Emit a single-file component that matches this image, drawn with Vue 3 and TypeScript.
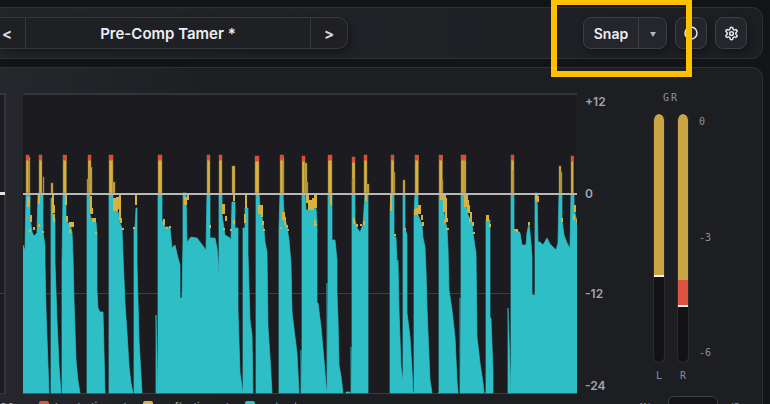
<template>
  <div class="page">
    <header class="topbar">
      <div class="preset">
        <button class="preset-arrow">&lt;</button>
        <div class="preset-name">Pre-Comp Tamer *</div>
        <button class="preset-arrow">&gt;</button>
      </div>
      <div class="actions">
        <div class="snap">
          <span class="snap-label">Snap</span>
          <span class="snap-drop"><i class="tri" /></span>
        </div>
        <button class="icon-btn">
          <svg width="16" height="16" viewBox="0 0 16 16" fill="none">
            <circle cx="8" cy="8" r="6" stroke="#e6e8ec" stroke-width="1.5" />
          </svg>
        </button>
        <button class="icon-btn">
          <svg width="15" height="15" viewBox="0 0 24 24" fill="none" stroke="#e6e8ec" stroke-width="2.4" stroke-linejoin="round">
            <path d="M12.220 2h-.440a2 2 0 0 0-2 2v.180a2 2 0 0 1-1 1.730l-.430.250a2 2 0 0 1-2 0l-.150-.080a2 2 0 0 0-2.730.730l-.220.380a2 2 0 0 0 .730 2.730l.150.100a2 2 0 0 1 1 1.720v.510a2 2 0 0 1-1 1.740l-.150.090a2 2 0 0 0-.730 2.730l.220.380a2 2 0 0 0 2.730.730l.150-.080a2 2 0 0 1 2 0l.430.250a2 2 0 0 1 1 1.730V20a2 2 0 0 0 2 2h.440a2 2 0 0 0 2-2v-.180a2 2 0 0 1 1-1.730l.430-.250a2 2 0 0 1 2 0l.150.080a2 2 0 0 0 2.730-.730l.220-.390a2 2 0 0 0-.730-2.730l-.150-.080a2 2 0 0 1-1-1.740v-.500a2 2 0 0 1 1-1.740l.150-.090a2 2 0 0 0 .730-2.730l-.220-.380a2 2 0 0 0-2.730-.730l-.150.080a2 2 0 0 1-2 0l-.430-.250a2 2 0 0 1-1-1.730V4a2 2 0 0 0-2-2z" />
            <circle cx="12" cy="12" r="3" />
          </svg>
        </button>
      </div>
    </header>

    <main class="panel">
      <div class="main-row">
        <div class="side-box"><i class="side-tick" /><i class="side-line" /></div>

        <svg class="chart" width="554" height="301" viewBox="23 93 554 301">
          <line x1="23" x2="577" y1="293.500" y2="293.500" stroke="#3b3e44" />
          <path
            :d="tealPath"
            fill="#2ebfc6"
            stroke="#2a8f97"
            stroke-width="1"
            paint-order="stroke"
          />
          <rect
            v-for="(s, i) in yellowSpots"
            :key="'y' + i"
            :x="s[0]"
            :y="s[1]"
            :width="s[2]"
            :height="s[3]"
            fill="#d9b13f"
          />
          <template v-for="(s, i) in spikes" :key="'s' + i">
            <rect
              :x="s.x"
              :y="s.top"
              :width="s.w"
              :height="193 - s.top"
              fill="#d9b13f"
              stroke="#7d6c36"
              stroke-width="0.5"
            />
            <rect v-if="s.red" :x="s.x" :y="s.top" :width="s.w" height="5.500" fill="#e5483a" />
          </template>
          <line x1="23" x2="577" y1="194" y2="194" stroke="#b8b8b8" stroke-width="2" />
        </svg>

        <div class="scale">
          <span
            v-for="t in ticks"
            :key="t.label"
            class="scale-label"
            :style="{ top: `${t.top}px` }"
          >{{ t.label }}</span>
        </div>

        <section class="gr">
          <div class="gr-title">GR</div>
          <div class="gr-body">
            <div class="meter">
              <div class="well">
                <div class="fill-yellow" :style="{ height: '161px' }" />
                <div class="peak" />
              </div>
              <span class="meter-name">L</span>
            </div>
            <div class="meter">
              <div class="well">
                <div class="fill-yellow" :style="{ height: '166px' }" />
                <div class="fill-red" :style="{ height: '25px' }" />
                <div class="peak" />
              </div>
              <span class="meter-name">R</span>
            </div>
            <div class="gr-scale">
              <span>0</span>
              <span>-3</span>
              <span>-6</span>
            </div>
          </div>
        </section>
      </div>

      <footer class="legend">
        <span class="legend-num">32</span>
        <span class="legend-item"><i class="sw sw-red" />hard clipped</span>
        <span class="legend-item soft"><i class="sw sw-yellow" />soft clipped</span>
        <span class="legend-item"><i class="sw sw-teal" />output</span>
        <span class="legend-right">
          <span class="mono">Mix</span>
          <span class="legend-box mono">1</span>
          <span class="mono">dB</span>
        </span>
      </footer>
    </main>

    <div class="highlight" />
  </div>
</template>

<script setup lang="ts">
type Pt = [number, number];

const ticks = [
  { label: "+12", top: 2 },
  { label: "0", top: 94 },
  { label: "-12", top: 194 },
  { label: "-24", top: 286 },
];

// teal outlines, read off the screenshot: [x, top of signal]
const bursts: Pt[][] = [
  [[23, 245], [25, 250], [26, 193], [30, 193], [30, 216], [32, 232], [34, 236], [37, 233], [38, 193], [43, 193], [43, 232], [45, 246], [45, 262], [46, 310], [48, 365], [49, 393]],
  [[51, 198], [53, 198], [53, 218], [55, 218], [55, 262], [57, 320], [59, 365], [61, 393]],
  [[62, 263], [63, 193], [66, 193], [66, 222], [70, 224], [72, 232], [73, 255], [74, 300], [76, 360], [78, 381], [80, 393]],
  [[87, 195], [90, 195], [90, 215], [92, 220], [96, 222], [97, 233], [97, 290], [98, 308], [100, 312], [103, 312], [105, 393]],
  [[109, 193], [113, 193], [113, 205], [118, 212], [120, 223], [122, 228], [123, 255], [125, 303], [127, 333], [129, 366], [131, 383], [133, 393]],
  [[134, 228], [135, 228], [136, 208], [137, 208], [137, 262], [139, 340], [142, 393]],
  [[158, 193], [162, 193], [162, 220], [165, 227], [168, 227], [170, 228], [172, 248], [175, 245], [178, 258], [180, 265], [180, 298], [182, 298], [183, 240], [183, 193], [186, 193], [187, 242], [191, 237], [197, 238], [203, 246], [206, 250], [207, 193], [210, 193], [210, 238], [215, 238], [217, 248], [218, 257], [219, 275], [219, 393], [156, 393], [156, 315]],
  [[219, 193], [222, 193], [222, 215], [225, 235], [230, 238], [231, 240], [232, 202], [235, 202], [235, 228], [238, 228], [238, 310], [240, 373], [243, 393], [219, 393]],
  [[243, 228], [245, 228], [245, 208], [248, 208], [248, 253], [250, 320], [252, 335], [253, 393]],
  [[256, 193], [259, 193], [260, 207], [262, 217], [264, 230], [265, 242], [267, 252], [268, 327], [270, 357], [272, 393]],
  [[279, 228], [280, 193], [283, 193], [284, 213], [286, 223], [287, 227], [289, 240], [291, 263], [292, 312], [295, 337], [297, 353], [299, 393]],
  [[302, 193], [305, 193], [306, 210], [312, 210], [316, 208], [317, 223], [317, 303], [318, 303], [321, 327], [324, 360], [326, 385], [327, 393], [301, 393], [301, 350]],
  [[328, 193], [332, 193], [332, 240], [335, 240], [337, 260], [337, 293], [338, 320], [339, 365], [341, 376], [343, 393], [327, 393], [327, 283]],
  [[346, 392], [350, 392], [350, 393], [346, 393]],
  [[352, 193], [355, 193], [355, 220], [357, 228], [360, 232], [363, 225], [365, 193], [368, 193], [368, 393], [351, 393], [351, 347]],
  [[390, 212], [391, 193], [394, 193], [394, 235], [396, 238], [397, 263], [398, 260], [399, 310], [401, 367], [403, 380], [403, 393], [390, 393]],
  [[403, 193], [405, 193], [405, 228], [407, 235], [407, 313], [410, 337], [412, 370], [413, 393], [403, 393]],
  [[414, 215], [415, 193], [418, 193], [418, 215], [420, 220], [422, 224], [423, 238], [425, 247], [426, 270], [427, 307], [428, 333], [430, 380], [432, 393], [412, 393]],
  [[439, 193], [443, 193], [443, 205], [445, 220], [447, 228], [448, 248], [449, 290], [452, 310], [455, 337], [457, 380], [458, 393], [438, 393]],
  [[461, 193], [465, 193], [465, 200], [468, 215], [472, 222], [473, 233], [475, 247], [476, 253], [477, 337], [480, 363], [483, 383], [484, 393], [460, 393], [460, 298]],
  [[486, 220], [490, 220], [490, 318], [491, 318], [493, 372], [493, 393], [485, 393]],
  [[511, 193], [514, 193], [514, 230], [517, 230], [520, 233], [522, 245], [526, 245], [527, 233], [529, 223], [531, 243], [532, 257], [532, 295], [535, 295], [535, 193], [537, 193], [538, 242], [540, 242], [543, 245], [547, 238], [550, 244], [556, 250], [558, 243], [559, 193], [562, 193], [562, 220], [564, 235], [567, 243], [570, 248], [571, 193], [574, 193], [574, 208], [577, 222], [577, 393], [508, 393], [508, 308]],
];

const tealPath = bursts
  .map((pts) => {
    const body = pts.map((p) => `L${p[0]},${p[1]}`).join("");
    return `M${pts[0][0]},393${body}Z`;
  })
  .join("");

const spikes = [
  [26, 3, 155, true], [39, 3, 155, true], [63, 3.5, 155, true], [88, 3, 155, true],
  [109, 4, 155, true], [158, 4, 155, true], [207, 3, 155, true], [219, 3, 155, true],
  [255, 4, 156, true], [280, 3.5, 155, true], [302, 3, 156, true], [328, 4, 155, true],
  [352, 3, 157, true], [364, 3, 155, true], [391, 3, 155, true], [415, 3.5, 155, true],
  [439, 3.5, 155, true], [461, 3.5, 155, true], [464, 2, 155, true], [511, 3, 155, true],
  [571, 2.5, 156, true],
  // no clip marker on these
  [51, 2, 183, false], [43, 1, 177, false], [87, 1, 179, false], [90, 2, 167, false],
  [113, 2, 182, false], [232, 3, 166, false], [305, 2, 163, false], [307, 1, 182, false],
  [352, 1, 179, false], [367, 2, 184, false], [403, 2, 180, false], [394, 1, 172, false],
  [442, 1, 180, false], [513, 1, 171, false], [559, 2, 166, false], [561, 1, 172, false],
  [29, 1, 157, false], [283, 1, 158, false],
].map(([x, w, top, red]) => ({ x, w, top, red })) as { x: number; w: number; top: number; red: boolean }[];

// residual soft-clip marks below the zero line: x, y, w, h
const yellowSpots: number[][] = [
  [27, 197, 3, 10], [30, 215, 2, 7], [29, 229, 2, 3], [33, 227, 2, 3], [38, 195, 2, 9],
  [38, 224, 2, 3], [42, 231, 2, 2], [52, 195, 2, 18], [53, 205, 2, 8], [53, 214, 2, 8],
  [65, 195, 2, 10], [66, 216, 2, 6], [69, 222, 3, 5], [72, 222, 2, 5], [69, 230, 2, 3],
  [90, 196, 2, 15], [90, 208, 3, 6], [92, 218, 4, 4], [95, 232, 2, 2], [113, 198, 5, 13],
  [116, 197, 3, 12], [119, 195, 2, 25], [120, 218, 2, 5], [122, 228, 2, 2], [135, 195, 2, 10],
  [133, 227, 2, 2], [163, 219, 2, 6], [166, 227, 2, 2], [169, 226, 2, 2], [184, 197, 3, 8],
  [187, 194, 2, 6], [209, 225, 2, 3], [222, 204, 3, 10], [225, 216, 2, 5], [223, 228, 2, 2],
  [233, 195, 2, 6], [233, 220, 2, 4], [230, 229, 2, 2], [245, 195, 2, 13], [244, 214, 2, 9],
  [258, 205, 5, 9], [261, 205, 2, 12], [262, 221, 2, 4], [263, 229, 2, 2], [282, 212, 3, 8],
  [284, 217, 2, 8], [286, 225, 2, 3], [280, 227, 2, 2], [287, 229, 2, 2], [306, 195, 3, 8],
  [308, 200, 4, 10], [312, 198, 2, 12], [314, 195, 3, 13], [314, 220, 2, 6], [315, 224, 2, 2],
  [330, 195, 2, 10], [353, 218, 2, 6], [356, 224, 2, 3], [360, 224, 2, 2], [363, 221, 2, 4],
  [365, 195, 2, 6], [390, 195, 2, 16], [394, 234, 2, 2], [404, 228, 2, 2], [416, 208, 2, 7],
  [414, 209, 2, 6], [418, 205, 3, 9], [421, 215, 2, 5], [422, 222, 2, 4], [440, 195, 4, 5],
  [443, 195, 3, 17], [445, 198, 2, 23], [444, 220, 2, 3], [446, 218, 2, 4], [446, 228, 3, 2],
  [464, 193, 4, 14], [467, 200, 2, 12], [468, 205, 2, 8], [470, 212, 2, 10], [469, 219, 3, 3],
  [472, 222, 2, 4], [473, 232, 2, 2], [486, 215, 3, 6], [489, 224, 2, 3], [514, 229, 4, 2],
  [516, 230, 2, 2], [528, 222, 2, 3], [535, 194, 3, 7], [537, 196, 2, 6], [561, 218, 2, 4],
  [574, 205, 2, 7], [573, 215, 2, 5], [576, 219, 1, 4],
];
</script>

<style scoped>
.page {
  position: relative;
  width: 770px;
  height: 404px;
  overflow: hidden;
  background: #131416;
  font-family: Inter, "Liberation Sans", sans-serif;
  color: #e8eaee;
  padding-top: 7px;
  box-sizing: border-box;
}

.topbar {
  display: flex;
  align-items: center;
  justify-content: space-between;
  width: 764px;
  height: 52px;
  margin-left: -1px;
  box-sizing: border-box;
  padding-right: 15px;
  background: linear-gradient(90deg, #24252a, #1d1e22);
  border: 1px solid #2e3035;
  border-radius: 0 11px 11px 0;
}

.preset {
  display: flex;
  align-items: stretch;
  width: 348px;
  height: 32px;
  box-sizing: border-box;
  background: #1f2024;
  border: 1px solid #36383d;
  border-left: 0;
  border-radius: 0 10px 10px 0;
  box-shadow: 3px 4px 8px rgba(0, 0, 0, 0.35);
}
.preset-arrow {
  width: 25px;
  flex: none;
  background: none;
  border: 0;
  padding: 0 11px 0 0;
  color: #d6d8dd;
  font: 700 15px Inter, sans-serif;
}
.preset-arrow:last-child {
  width: 36px;
  padding: 0;
}
.preset-name {
  flex: 1;
  display: flex;
  align-items: center;
  justify-content: center;
  border-left: 1px solid #36383d;
  border-right: 1px solid #36383d;
  font-size: 15px;
  font-weight: 600;
  color: #eceef2;
}

.actions {
  display: flex;
  align-items: center;
  gap: 8px;
}
.snap {
  display: flex;
  align-items: stretch;
  width: 84px;
  height: 32px;
  box-sizing: border-box;
  background: #25262b;
  border: 1px solid #3d3f45;
  border-radius: 8px;
  box-shadow: 2px 3px 7px rgba(0, 0, 0, 0.35);
}
.snap-label {
  width: 54px;
  display: flex;
  align-items: center;
  justify-content: center;
  font-size: 14px;
  font-weight: 600;
  border-right: 1px solid #3d3f45;
  color: #eceef2;
}
.snap-drop {
  flex: 1;
  display: flex;
  align-items: center;
  justify-content: center;
}
.tri {
  width: 0;
  height: 0;
  margin-top: 2px;
  border-left: 3.5px solid transparent;
  border-right: 3.5px solid transparent;
  border-top: 5px solid #b4b6bc;
}
.icon-btn {
  display: flex;
  align-items: center;
  justify-content: center;
  width: 32px;
  height: 32px;
  padding: 0;
  box-sizing: border-box;
  background: #25262b;
  border: 1px solid #3d3f45;
  border-radius: 8px;
  box-shadow: 2px 3px 7px rgba(0, 0, 0, 0.35);
}

.panel {
  width: 764px;
  height: 345px;
  margin-top: 8px;
  margin-left: -1px;
  box-sizing: border-box;
  padding-top: 25px;
  background: linear-gradient(90deg, #26272c 0, #1d1e22 30%);
  border: 1px solid #2e3035;
  border-bottom: 0;
  border-radius: 0 11px 0 0;
}
.main-row {
  display: flex;
  align-items: flex-start;
}

.side-box {
  position: relative;
  width: 6px;
  height: 301px;
  box-sizing: border-box;
  border: 2px solid #33353b;
  border-left: 0;
  border-bottom-width: 1px;
  background: #1c1c20;
  flex: none;
}
.side-tick {
  position: absolute;
  left: 0;
  right: -1px;
  top: 97px;
  height: 3px;
  background: #e2e2e2;
}
.side-line {
  position: absolute;
  left: 0;
  right: 0;
  top: 198px;
  height: 1px;
  background: #3b3e44;
}

.chart {
  display: block;
  flex: none;
  margin-left: 17px;
  background: #1c1c20;
  box-shadow: inset 0 2px 0 #33353b, inset 0 -1px 0 #3b3e44;
}

.scale {
  position: relative;
  flex: none;
  width: 68px;
  height: 301px;
  margin-left: 8px;
}
.scale-label {
  position: absolute;
  left: 0;
  font-size: 12px;
  line-height: 14px;
  font-weight: 600;
  color: #a2a5ae;
}

.gr {
  flex: none;
  width: 90px;
}
.gr-title {
  width: 36px;
  height: 21px;
  text-align: center;
  font: 10px/10px "DejaVu Sans Mono", monospace;
  letter-spacing: 2px;
  color: #8a93a3;
}
.gr-body {
  display: flex;
  gap: 12px;
}
.meter {
  display: flex;
  flex-direction: column;
  align-items: center;
  width: 12px;
}
.well {
  width: 12px;
  height: 249px;
  box-sizing: border-box;
  background: #131315;
  border: 1px solid #2b2d31;
  border-top: 0;
  border-radius: 6px;
  overflow: hidden;
}
.fill-yellow {
  background: #c9a544;
  border-radius: 5px 5px 0 0;
}
.fill-red {
  background: #de5340;
}
.peak {
  height: 2px;
  background: #f4f4f4;
}
.meter-name {
  margin-top: 7px;
  font: 10px/12px "DejaVu Sans Mono", monospace;
  color: #7f8ea6;
}
.gr-scale {
  display: flex;
  flex-direction: column;
  justify-content: space-between;
  height: 243px;
  margin-left: -2px;
  padding-top: 2px;
  font: 10px/12px "DejaVu Sans Mono", monospace;
  color: #8d9199;
}

.legend {
  display: flex;
  align-items: flex-start;
  margin-top: 2px;
  font-size: 11px;
  line-height: 12px;
  letter-spacing: 0.6px;
  color: #a0a3ac;
}
.legend-num {
  width: 39px;
  flex: none;
  padding-top: 5px;
}
.legend-item {
  display: flex;
  gap: 6px;
  width: 104px;
  flex: none;
  padding-top: 5px;
}
.legend-item.soft {
  width: 102px;
  gap: 8px;
}
.sw {
  width: 10px;
  height: 10px;
  border-radius: 2px;
  flex: none;
}
.sw-red { background: #de5340; }
.sw-yellow { background: #d9b13f; }
.sw-teal { background: #2ebfc6; }
.legend-right {
  display: flex;
  align-items: flex-start;
  gap: 10px;
  margin-left: 291px;
}
.mono {
  font-family: "DejaVu Sans Mono", monospace;
  font-size: 10px;
  letter-spacing: 0;
  color: #7f8ea6;
  padding-top: 6px;
}
.legend-box {
  width: 50px;
  height: 20px;
  padding: 6px 0 0 9px;
  box-sizing: border-box;
  border: 1px solid #3b3e44;
  border-radius: 6px;
  background: #141416;
  color: #a0a3ac;
}

.highlight {
  position: absolute;
  left: 551px;
  top: -1px;
  width: 141px;
  height: 78px;
  box-sizing: border-box;
  border: 6px solid #ffc000;
}
</style>

<style>
html, body {
  background: #131416;
}
</style>
